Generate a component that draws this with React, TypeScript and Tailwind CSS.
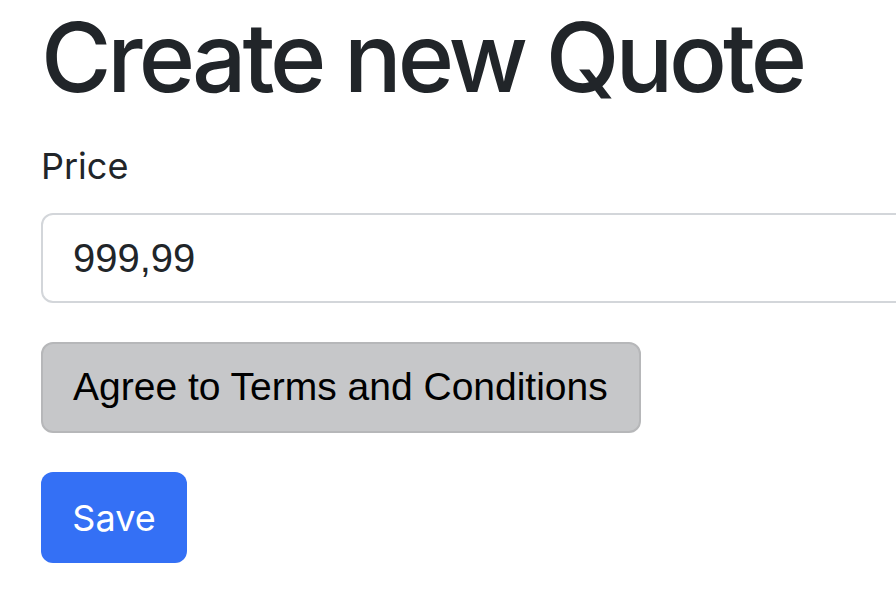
import React from "react";

function App() {
  return (
    <div className="w-[896px] h-[593px] overflow-hidden bg-white pl-[41px] font-['Inter',sans-serif] text-[#212529]">
      <h1 className="text-[96px] leading-[115px] font-medium tracking-[-0.042em] whitespace-nowrap">
        Create new Quote
      </h1>
      <label className="block mt-[27px] text-[36px] leading-[48px]">
        Price
      </label>
      <input
        defaultValue="999,99"
        className="block mt-[23px] w-[1000px] h-[90px] border-2 border-[#d3d6da] rounded-[12px] pl-[30px] text-[40px] font-['Liberation_Sans',Arial,sans-serif] text-[#212529] outline-none"
      />
      <button className="flex items-center mt-[39px] w-[600px] h-[91px] pl-[30px] bg-[#c6c7c9] border-2 border-[#b6b7b9] rounded-[12px] text-[39px] text-black font-['Liberation_Sans',Arial,sans-serif]">
        Agree to Terms and Conditions
      </button>
      <button className="flex items-center justify-center mt-[39px] w-[146px] h-[91px] bg-[#3470f5] rounded-[12px] text-[36px] text-white">
        Save
      </button>
    </div>
  );
}

export default App;
